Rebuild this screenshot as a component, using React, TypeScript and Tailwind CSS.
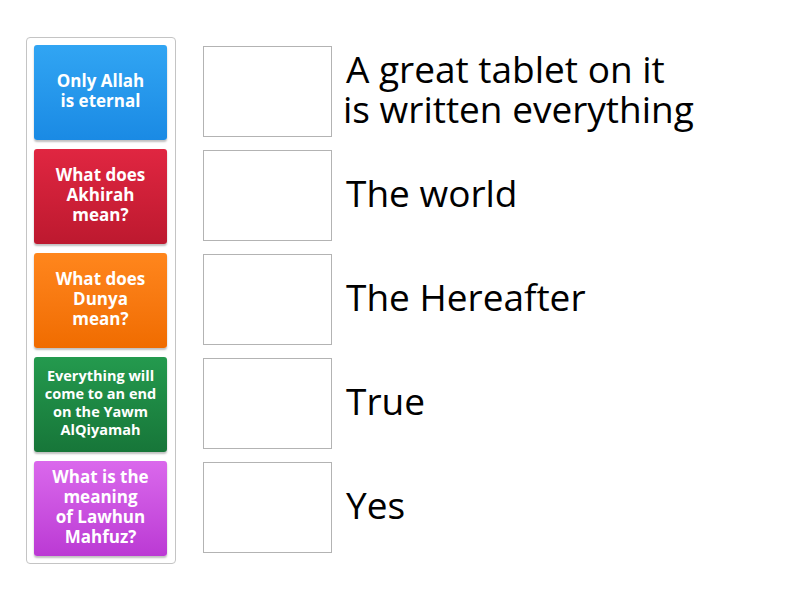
import React from "react";

const cards = [
  { lines: ["Only Allah", "is eternal"], cls: "bg-gradient-to-b from-[#31a5f3] to-[#1a8ae4]", small: false },
  { lines: ["What does", "Akhirah", "mean?"], cls: "bg-gradient-to-b from-[#e02641] to-[#bd192f]", small: false },
  { lines: ["What does", "Dunya", "mean?"], cls: "bg-gradient-to-b from-[#ff861c] to-[#f06c00]", small: false },
  { lines: ["Everything will", "come to an end", "on the Yawm", "AlQiyamah"], cls: "bg-gradient-to-b from-[#249a4e] to-[#177639]", small: true },
  { lines: ["What is the", "meaning", "of Lawhun", "Mahfuz?"], cls: "bg-gradient-to-b from-[#da68ec] to-[#bb39d4]", small: false },
];

const answers = [
  ["A great tablet on it", "is written everything"],
  ["The world"],
  ["The Hereafter"],
  ["True"],
  ["Yes"],
];

export default function App() {
  return (
    <div className="w-[800px] h-[600px] bg-white relative" style={{ fontFamily: '"Open Sans", sans-serif' }}>
      <div className="flex pt-[37px] pl-[26px]">
        <div className="w-[150px] border border-[#c4c4c4] rounded-[4px] p-[7px] flex flex-col gap-[9px]">
          {cards.map((c, i) => (
            <div
              key={i}
              className={`h-[95px] w-[133px] rounded-[3px] shadow-[0_2px_2px_rgba(0,0,0,0.25)] flex items-center justify-center text-center text-white font-bold ${c.cls} ${c.small ? "text-[14.5px] leading-[18px]" : "text-[17px] leading-[20px] -mt-0"}`}
            >
              <div className="-mt-[3px]">
                {c.lines.map((l, j) => (
                  <div key={j}>{l}</div>
                ))}
              </div>
            </div>
          ))}
        </div>
        <div className="ml-[27px] pt-[9px] flex flex-col gap-[13px]">
          {answers.map((a, i) => (
            <div key={i} className="flex items-center h-[91px]">
              <div className="w-[129px] h-[91px] border border-[#b3b3b3] bg-white shrink-0" />
              <div className="ml-[14px] text-[37px] leading-[40px] text-black -mt-[6px]">
                {a.map((l, j) => (
                  <div key={j} className={j === 1 ? "-ml-[3px]" : ""}>{l}</div>
                ))}
              </div>
            </div>
          ))}
        </div>
      </div>
    </div>
  );
}
